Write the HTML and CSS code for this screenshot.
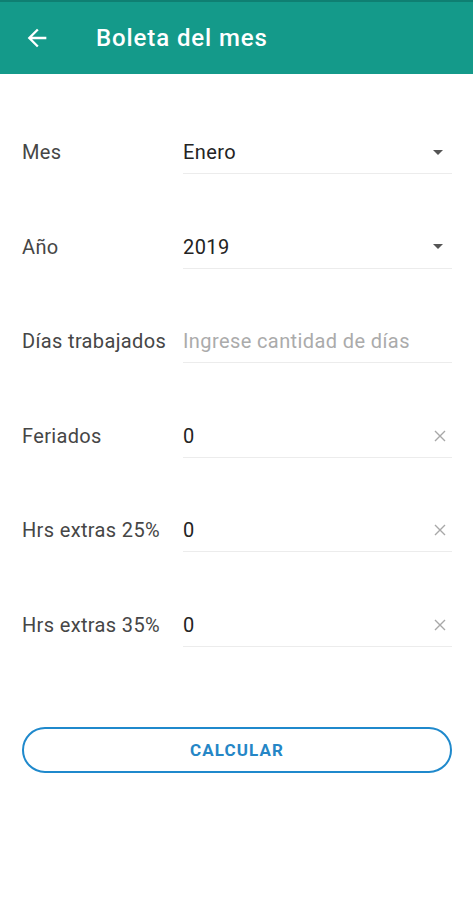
FILE: index.html
```html
<!DOCTYPE html>
<html lang="es">

<head>
    <meta charset="UTF-8">
    <meta name="viewport" content="width=device-width, initial-scale=1.0">
    <title>Boleta del mes</title>
    <link rel="stylesheet" href="styles.css">
</head>

<body>
    <header class="toolbar">
        <button class="back" aria-label="Volver">
            <svg width="28" height="28" viewBox="0 0 24 24">
                <path d="M20 11H7.83l5.59-5.59L12 4l-8 8 8 8 1.41-1.41L7.83 13H20v-2z" fill="#fff" />
            </svg>
        </button>
        <h1>Boleta del mes</h1>
    </header>

    <form class="form" autocomplete="off">
        <div class="row">
            <label class="label">Mes</label>
            <div class="field">
                <span class="value">Enero</span>
                <span class="caret"></span>
            </div>
        </div>
        <div class="row">
            <label class="label">Año</label>
            <div class="field">
                <span class="value">2019</span>
                <span class="caret"></span>
            </div>
        </div>
        <div class="row">
            <label class="label">Días trabajados</label>
            <div class="field">
                <span class="value placeholder">Ingrese cantidad de días</span>
            </div>
        </div>
        <div class="row">
            <label class="label">Feriados</label>
            <div class="field">
                <span class="value">0</span>
                <svg class="clear" width="12" height="12" viewBox="0 0 12 12">
                    <path d="M1 1L11 11M11 1L1 11" stroke="#a8a8a8" stroke-width="1.4" />
                </svg>
            </div>
        </div>
        <div class="row">
            <label class="label">Hrs extras 25%</label>
            <div class="field">
                <span class="value">0</span>
                <svg class="clear" width="12" height="12" viewBox="0 0 12 12">
                    <path d="M1 1L11 11M11 1L1 11" stroke="#a8a8a8" stroke-width="1.4" />
                </svg>
            </div>
        </div>
        <div class="row">
            <label class="label">Hrs extras 35%</label>
            <div class="field">
                <span class="value">0</span>
                <svg class="clear" width="12" height="12" viewBox="0 0 12 12">
                    <path d="M1 1L11 11M11 1L1 11" stroke="#a8a8a8" stroke-width="1.4" />
                </svg>
            </div>
        </div>

        <button type="button" class="calc">CALCULAR</button>
    </form>
</body>

</html>
```

FILE: styles.css
```css
* {
    box-sizing: border-box;
}

body {
    margin: 0;
    background: #fff;
    font-family: Roboto, "Noto Sans", sans-serif;
}

.toolbar {
    height: 74px;
    background: #149a8a;
    border-top: 2px solid #0f7f72;
    display: flex;
    align-items: center;
    padding-left: 23px;
}

.back {
    border: 0;
    background: none;
    padding: 0;
    display: flex;
    margin-right: 45px;
}

.toolbar h1 {
    margin: 0;
    color: #fff;
    font-size: 24px;
    font-weight: 500;
    letter-spacing: 0.9px;
}

.form {
    padding: 57px 21px 0 22px;
    display: flex;
    flex-direction: column;
    gap: 51.6px;
}

.row {
    display: grid;
    grid-template-columns: 161px 1fr;
    height: 43px;
}

.label {
    align-self: center;
    margin-bottom: 1px;
    color: #464646;
    font-size: 20px;
    letter-spacing: 0.35px;
    white-space: nowrap;
}

.field {
    display: flex;
    align-items: center;
    justify-content: space-between;
    border-bottom: 1px solid #ececec;
    padding-right: 8px;
}

.value {
    color: #232323;
    font-size: 20px;
    letter-spacing: 0.4px;
}

.placeholder {
    color: #ababab;
}

.caret {
    width: 0;
    height: 0;
    border-left: 5px solid transparent;
    border-right: 5px solid transparent;
    border-top: 5px solid #555;
    margin-right: 1px;
}

.clear {
    margin-right: -2px;
}

.calc {
    margin-top: 28px;
    height: 46px;
    border: 2px solid #1f89cc;
    border-radius: 23px;
    background: #fff;
    color: #2586c6;
    font-family: Roboto, sans-serif;
    font-size: 17px;
    font-weight: 700;
    letter-spacing: 1.1px;
}
```
